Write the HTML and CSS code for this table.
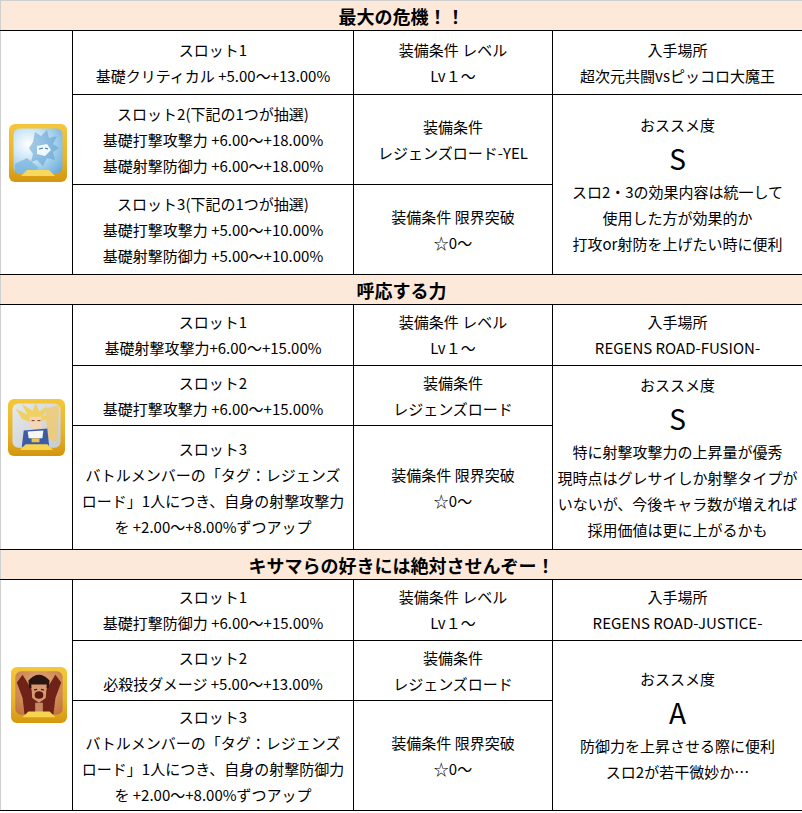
FILE: index.html
```html
<!DOCTYPE html>
<html lang="ja">
<head>
<meta charset="utf-8">
<link rel="stylesheet" href="styles.css">
</head>
<body>
<table class="sheet">
  <colgroup>
    <col class="c-icon"><col class="c-slot"><col class="c-cond"><col class="c-info">
  </colgroup>
  <tbody>
    <tr class="hrow first"><th colspan="4">最大の危機！！</th></tr>
    <tr class="r-a">
      <td rowspan="3" class="icon">
        <svg class="pic pic1" width="58" height="58" viewBox="0 0 58 58">
          <defs>
            <linearGradient id="g1" x1="0" y1="0" x2="0" y2="1"><stop offset="0" stop-color="#f5c63c"/><stop offset="0.6" stop-color="#e9b22a"/><stop offset="1" stop-color="#d4960f"/></linearGradient>
            <radialGradient id="b1" cx="0.3" cy="0.35" r="0.9"><stop offset="0" stop-color="#ffffff"/><stop offset="0.35" stop-color="#cfe8f7"/><stop offset="0.75" stop-color="#8ec3e6"/><stop offset="1" stop-color="#6aa8d6"/></radialGradient>
          </defs>
          <rect x="0" y="0" width="58" height="58" rx="6" fill="url(#g1)"/>
          <rect x="4.5" y="4.5" width="49" height="45" rx="6" fill="url(#b1)"/>
          <path d="M26 8 L32 12 L38 6 L40 14 L48 12 L44 20 L50 24 L44 28 L46 36 L38 34 L34 42 L28 36 L22 38 L24 30 L20 24 L24 18 Z" fill="#5f9fd0" opacity="0.55"/>
          <path d="M28 22 L38 20 L42 26 L36 32 L28 30 Z" fill="#f2f9fd"/>
          <path d="M30 25 L34 24 M36 24 L39 25" stroke="#3d78a8" stroke-width="1.2"/>
          <path d="M6 40 L18 34 L30 44 L22 49 L6 49 Z" fill="#78b2dc" opacity="0.7"/>
          <path d="M12 52 L18 46 L40 46 L46 52 Z" fill="#f8d85c"/>
        </svg>
      </td>
      <td>スロット1<br>基礎クリティカル +5.00～+13.00%</td>
      <td>装備条件 レベル<br>Lv１～</td>
      <td>入手場所<br>超次元共闘vsピッコロ大魔王</td>
    </tr>
    <tr class="r-b">
      <td>スロット2(下記の1つが抽選)<br>基礎打撃攻撃力 +6.00～+18.00%<br>基礎射撃防御力 +6.00～+18.00%</td>
      <td>装備条件<br>レジェンズロード-YEL</td>
      <td rowspan="2">おススメ度<br><span class="grade">S</span><br>スロ2・3の効果内容は統一して<br>使用した方が効果的か<br>打攻or射防を上げたい時に便利</td>
    </tr>
    <tr class="r-c">
      <td>スロット3(下記の1つが抽選)<br>基礎打撃攻撃力 +5.00～+10.00%<br>基礎射撃防御力 +5.00～+10.00%</td>
      <td>装備条件 限界突破<br>☆0～</td>
    </tr>

    <tr class="hrow"><th colspan="4">呼応する力</th></tr>
    <tr class="r-d">
      <td rowspan="3" class="icon">
        <svg class="pic pic2" width="57" height="57" viewBox="0 0 58 58">
          <defs>
            <linearGradient id="g2" x1="0" y1="0" x2="0" y2="1"><stop offset="0" stop-color="#f3c738"/><stop offset="0.6" stop-color="#e8b228"/><stop offset="1" stop-color="#d3950e"/></linearGradient>
            <linearGradient id="b2" x1="0" y1="0" x2="1" y2="1"><stop offset="0" stop-color="#e4e8ea"/><stop offset="1" stop-color="#c4ccd2"/></linearGradient>
          </defs>
          <rect x="0" y="0" width="58" height="58" rx="6" fill="url(#g2)"/>
          <rect x="4.5" y="4.5" width="49" height="45" rx="6" fill="url(#b2)"/>
          <path d="M38 10 L52 6 L50 44 L40 40 Z" fill="#f3c868" opacity="0.75"/>
          <path d="M8 10 L20 16 L14 5 L25 12 L28 4 L32 13 L40 7 L36 17 L44 18 L36 22 L24 24 L14 20 Z" fill="#f0d060"/>
          <path d="M22 18 L34 18 L34 28 L28 32 L22 28 Z" fill="#f6d4b4"/>
          <path d="M24 22 L27 22 M30 22 L33 22" stroke="#5a3a2a" stroke-width="1"/>
          <path d="M16 32 L40 30 L42 49 L14 49 Z" fill="#3e5ca6"/>
          <path d="M20 33 L36 32 L35 40 L21 40 Z" fill="#f6f6f6"/>
          <path d="M24 40 L32 40 L32 44 L24 44 Z" fill="#e9c34a"/>
          <path d="M12 52 L18 46 L40 46 L46 52 Z" fill="#f6d450"/>
        </svg>
      </td>
      <td>スロット1<br>基礎射撃攻撃力+6.00～+15.00%</td>
      <td>装備条件 レベル<br>Lv１～</td>
      <td>入手場所<br>REGENS ROAD-FUSION-</td>
    </tr>
    <tr class="r-e">
      <td>スロット2<br>基礎打撃攻撃力 +6.00～+15.00%</td>
      <td>装備条件<br>レジェンズロード</td>
      <td rowspan="2">おススメ度<br><span class="grade">S</span><br>特に射撃攻撃力の上昇量が優秀<br>現時点はグレサイしか射撃タイプが<br>いないが、今後キャラ数が増えれば<br>採用価値は更に上がるかも</td>
    </tr>
    <tr class="r-f">
      <td>スロット3<br>バトルメンバーの「タグ：レジェンズ<br>ロード」1人につき、自身の射撃攻撃力<br>を +2.00～+8.00%ずつアップ</td>
      <td>装備条件 限界突破<br>☆0～</td>
    </tr>

    <tr class="hrow"><th colspan="4">キサマらの好きには絶対させんぞー！</th></tr>
    <tr class="r-d">
      <td rowspan="3" class="icon">
        <svg class="pic pic3" width="56" height="56" viewBox="0 0 58 58">
          <defs>
            <linearGradient id="g3" x1="0" y1="0" x2="0" y2="1"><stop offset="0" stop-color="#f4c83a"/><stop offset="0.6" stop-color="#e9b42a"/><stop offset="1" stop-color="#d5980f"/></linearGradient>
            <radialGradient id="b3" cx="0.5" cy="0.35" r="0.75"><stop offset="0" stop-color="#eab07e"/><stop offset="1" stop-color="#c0743e"/></radialGradient>
          </defs>
          <rect x="0" y="0" width="58" height="58" rx="6" fill="url(#g3)"/>
          <rect x="4.5" y="4.5" width="49" height="45" rx="6" fill="url(#b3)"/>
          <path d="M6 16 L12 8 L22 24 L36 24 L46 8 L52 16 L46 32 L44 49 L14 49 L12 32 Z" fill="#6e2218"/>
          <path d="M18 14 Q29 2 40 14 L39 22 L19 22 Z" fill="#2b1510"/>
          <path d="M21 18 L37 18 L36 32 L29 37 L22 32 Z" fill="#d89870"/>
          <ellipse cx="29" cy="29" rx="4.5" ry="4" fill="#5a1810"/>
          <path d="M24 24 L27 23 M31 23 L34 24" stroke="#2b1510" stroke-width="1.2"/>
          <path d="M25 37 L33 37 L33 49 L25 49 Z" fill="#c78a60"/>
          <path d="M12 52 L18 46 L40 46 L46 52 Z" fill="#f6d450"/>
        </svg>
      </td>
      <td>スロット1<br>基礎打撃防御力 +6.00～+15.00%</td>
      <td>装備条件 レベル<br>Lv１～</td>
      <td>入手場所<br>REGENS ROAD-JUSTICE-</td>
    </tr>
    <tr class="r-e">
      <td>スロット2<br>必殺技ダメージ +5.00～+13.00%</td>
      <td>装備条件<br>レジェンズロード</td>
      <td rowspan="2">おススメ度<br><span class="grade">A</span><br>防御力を上昇させる際に便利<br>スロ2が若干微妙か…</td>
    </tr>
    <tr class="r-g">
      <td>スロット3<br>バトルメンバーの「タグ：レジェンズ<br>ロード」1人につき、自身の射撃防御力<br>を +2.00～+8.00%ずつアップ</td>
      <td>装備条件 限界突破<br>☆0～</td>
    </tr>
  </tbody>
</table>
</body>
</html>
```

FILE: styles.css
```css
html, body {
  margin: 0;
  padding: 0;
  background: #ffffff;
}

.sheet {
  border-collapse: collapse;
  table-layout: fixed;
  width: 802px;
  font-family: "Noto Sans CJK JP", "Noto Sans", sans-serif;
  font-size: 15px;
  line-height: 26px;
  color: #000000;
}

.c-icon { width: 72px; }
.c-slot { width: 281px; }
.c-cond { width: 199px; }
.c-info { width: 250px; }

.sheet td,
.sheet th {
  border: 1px solid #000000;
  text-align: center;
  vertical-align: middle;
  padding: 0;
  white-space: nowrap;
}

.sheet td.icon {
  border-left: 1px solid #cfcfcf;
}

.sheet td.icon .pic {
  display: block;
}

.pic1 { margin: 0 0 0 8px; }
.pic2 { margin: 0 0 0 7px; }
.pic3 { margin: 0 0 0 10px; }

.hrow th {
  background: #fde9d9;
  font-size: 18px;
  font-weight: bold;
  height: 29px;
  line-height: 26px;
  border-left-color: #cfcfcf;
}

.hrow.first th {
  border-top-color: #cfcfcf;
}

.grade {
  display: inline-block;
  font-size: 28px;
  line-height: 41px;
  vertical-align: top;
}

.r-a td { height: 63px; }
.r-b td { height: 89px; }
.r-c td { height: 89px; }
.r-d td { height: 60px; }
.r-e td { height: 59px; }
.r-f td { height: 123px; }
.r-g td { height: 109px; }
```
